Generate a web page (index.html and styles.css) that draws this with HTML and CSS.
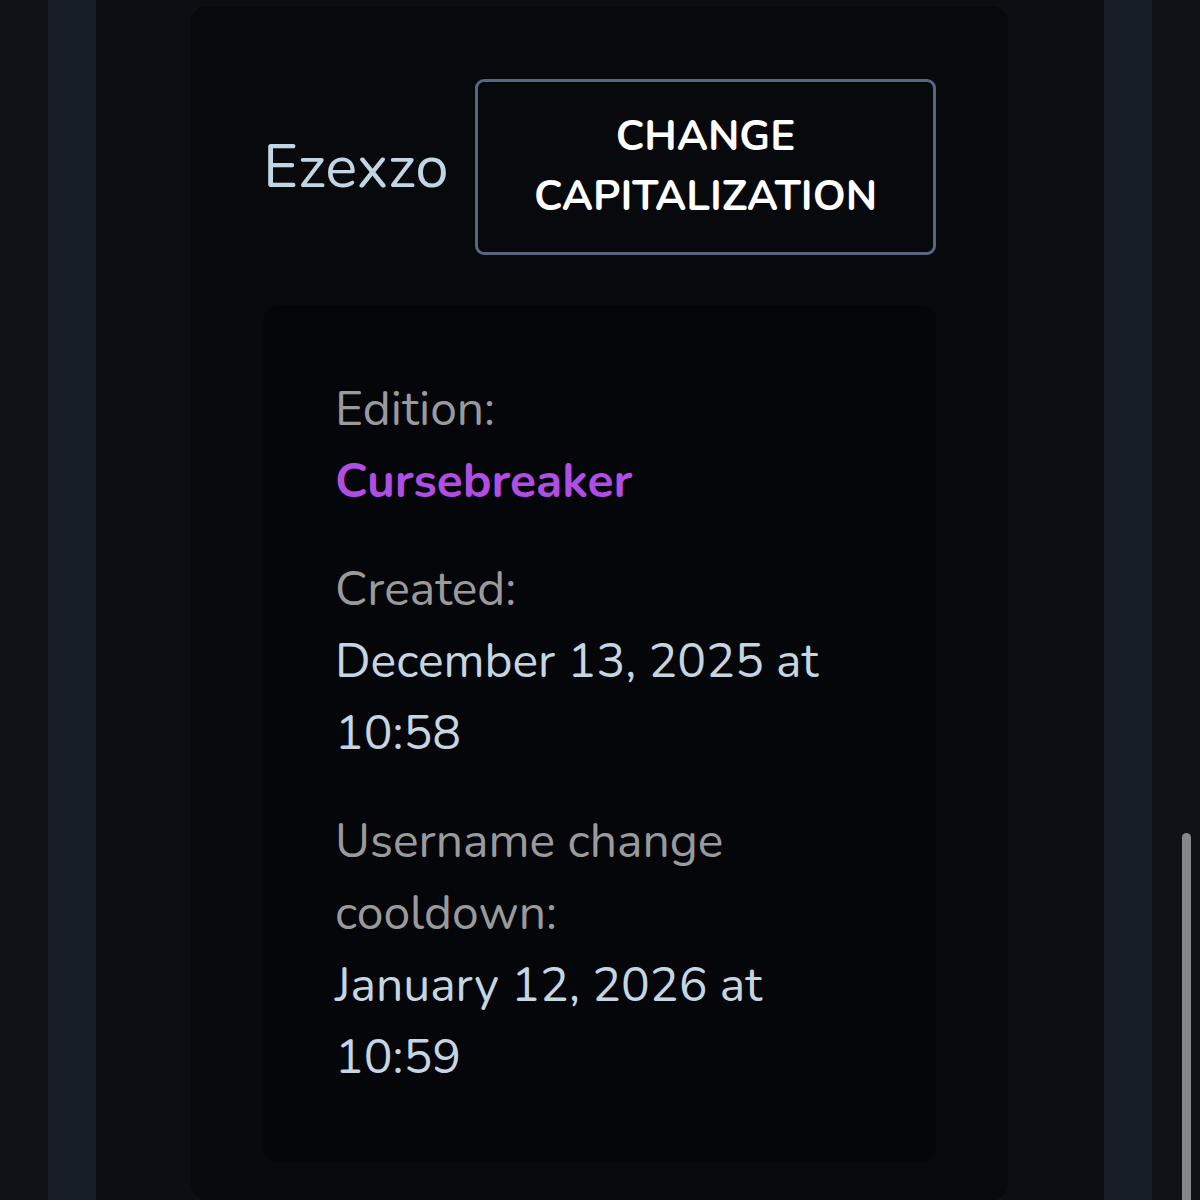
FILE: index.html
```html
<!DOCTYPE html>
<html lang="en">
<head>
<meta charset="utf-8">
<title>Profile</title>
<link rel="stylesheet" href="styles.css">
</head>
<body>
<div class="page">
  <div class="gutter"></div>
  <div class="stripe"></div>
  <main class="main">
    <section class="card">
      <div class="header">
        <h1 class="username">Ezexzo</h1>
        <button class="cap-btn">CHANGE CAPITALIZATION</button>
      </div>
      <div class="info">
        <div class="field">
          <div class="label">Edition:</div>
          <div class="value edition">Cursebreaker</div>
        </div>
        <div class="field">
          <div class="label">Created:</div>
          <div class="value">December 13, 2025 at 10:58</div>
        </div>
        <div class="field">
          <div class="label">Username change cooldown:</div>
          <div class="value">January 12, 2026 at 10:59</div>
        </div>
      </div>
    </section>
  </main>
  <div class="stripe"></div>
  <div class="gutter"></div>
</div>
<div class="scrollbar"><div class="thumb"></div></div>
</body>
</html>
```
FILE: styles.css
```css
html, body {
  margin: 0;
  padding: 0;
  height: 1200px;
  overflow: hidden;
  background: #0f1317;
  font-family: "Nunito", "Lato", "Open Sans", sans-serif;
}
.page {
  display: flex;
  height: 1200px;
}
.gutter {
  width: 48px;
  background: #0f1317;
}
.stripe {
  width: 48px;
  background: #181e28;
}
.main {
  flex: 1;
  background: #0b0e13;
  padding: 6px 96px 0 95px;
}
.card {
  background: #07090d;
  border-radius: 16px;
  height: 100%;
  box-sizing: border-box;
  padding: 73px 72px 0 72px;
}
.header {
  display: flex;
  align-items: center;
  justify-content: space-between;
}
.username {
  margin: 0;
  font-weight: 400;
  font-size: 60px;
  color: #c1d5e3;
}
.cap-btn {
  width: 461px;
  height: 176px;
  box-sizing: border-box;
  background: #07090d;
  border: 3px solid #5b6583;
  border-radius: 9px;
  color: #ffffff;
  font-family: inherit;
  font-weight: 700;
  font-size: 42px;
  line-height: 60px;
  padding: 0 40px;
  text-align: center;
}
.info {
  margin-top: 50px;
  background: #050609;
  border-radius: 16px;
  height: 858px;
  box-sizing: border-box;
  padding: 68px 72px 0 72px;
  font-size: 48px;
  line-height: 72px;
}
.field + .field {
  margin-top: 36px;
}
.label {
  color: #9a9a9c;
}
.value {
  color: #c5d5e2;
}
.edition {
  color: #b04de2;
  font-weight: 700;
}
.scrollbar {
  position: fixed;
  top: 0;
  right: 0;
  width: 48px;
  height: 1200px;
  pointer-events: none;
}
.thumb {
  position: absolute;
  left: 30px;
  top: 833px;
  width: 9px;
  height: 400px;
  border-radius: 5px;
  background: #85878b;
}
```
